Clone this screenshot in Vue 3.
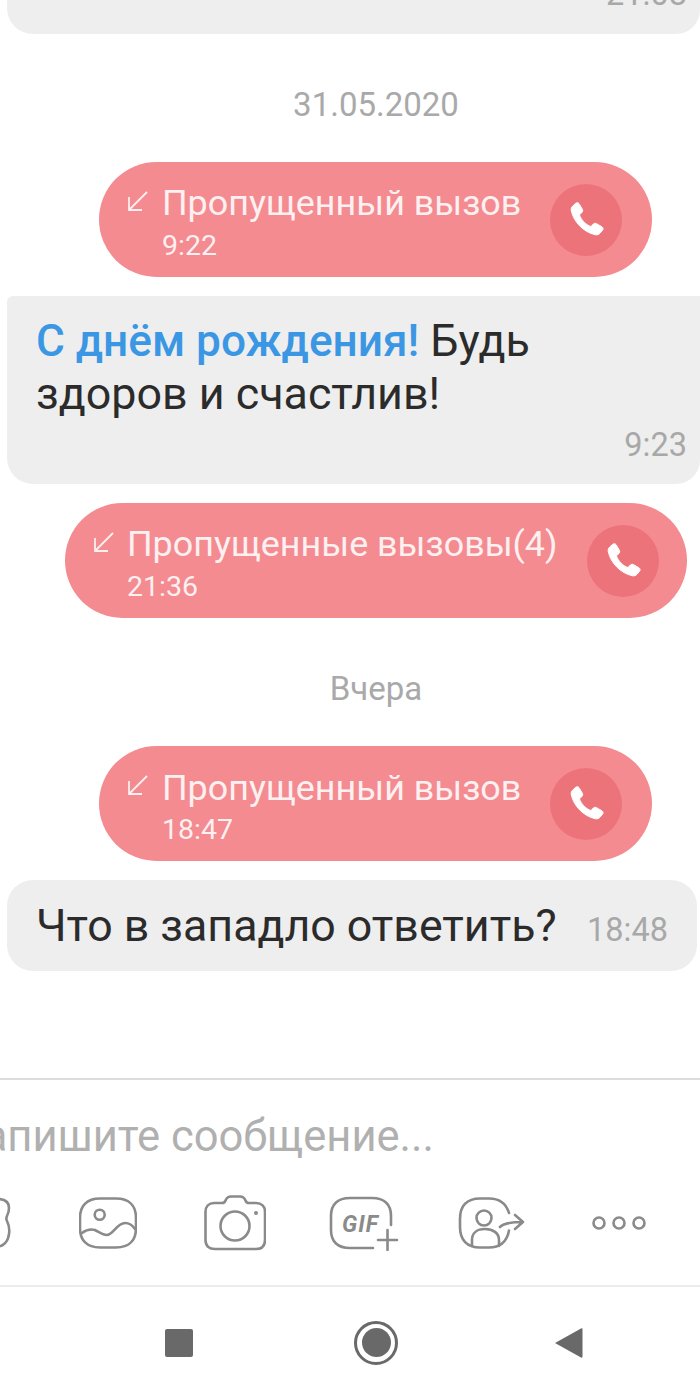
<script setup>
const calls = {
  first: { title: 'Пропущенный вызов', time: '9:22' },
  long: { title: 'Пропущенные вызовы(4)', time: '21:36' },
  third: { title: 'Пропущенный вызов', time: '18:47' }
}
const phonePath = 'M6.6 3.3c.6-.5 1.4-.4 1.8.2l1.7 2.9c.3.6.2 1.2-.2 1.7L8.6 9.2c.7 2.6 3.4 5.4 6 6.2l1.2-1.3c.5-.4 1.1-.5 1.7-.2l2.9 1.7c.6.4.7 1.2.2 1.8l-1.3 1.5c-.6.7-1.5 1-2.4.8C10.8 18.4 5.6 13.2 4.3 7.1c-.2-.9.1-1.8.8-2.4z'
</script>

<template>
  <div class="page">
    <div class="top-bubble"><span class="top-time">21:08</span></div>
    <div class="date first-date">31.05.2020</div>

    <div class="call call-short first-call">
      <svg class="arrow" viewBox="0 0 24 24" width="24" height="24"><path d="M21 3 3 21M3 8v13h13" /></svg>
      <div class="call-text">
        <div class="call-title">{{ calls.first.title }}</div>
        <div class="call-time">{{ calls.first.time }}</div>
      </div>
      <div class="phone"><svg viewBox="0 0 24 24" width="46" height="46"><path :d="phonePath" /></svg></div>
    </div>

    <div class="bubble wish">
      <div class="wish-text"><span class="blue">С днём рождения!</span> Будь<br />здоров и счастлив!</div>
      <div class="wish-time">9:23</div>
    </div>

    <div class="call call-long">
      <svg class="arrow" viewBox="0 0 24 24" width="24" height="24"><path d="M21 3 3 21M3 8v13h13" /></svg>
      <div class="call-text">
        <div class="call-title">{{ calls.long.title }}</div>
        <div class="call-time">{{ calls.long.time }}</div>
      </div>
      <div class="phone"><svg viewBox="0 0 24 24" width="46" height="46"><path :d="phonePath" /></svg></div>
    </div>

    <div class="date yesterday">Вчера</div>

    <div class="call call-short third-call">
      <svg class="arrow" viewBox="0 0 24 24" width="24" height="24"><path d="M21 3 3 21M3 8v13h13" /></svg>
      <div class="call-text">
        <div class="call-title">{{ calls.third.title }}</div>
        <div class="call-time">{{ calls.third.time }}</div>
      </div>
      <div class="phone"><svg viewBox="0 0 24 24" width="46" height="46"><path :d="phonePath" /></svg></div>
    </div>

    <div class="bubble reply">
      <span class="reply-text">Что в западло ответить?</span>
      <span class="reply-time">18:48</span>
    </div>

    <div class="composer">
      <div class="input-line"><span>Напишите сообщение...</span></div>
      <div class="tools">
        <svg class="t-smile" viewBox="0 0 40 54" width="40" height="54"><path d="M10 3h14c8 0 12 3 12 9 0 4-1 6-2 8-1 2-1 3 0 5 2 4 3 7 2 13-1 8-6 13-14 13H10" /></svg>
        <svg class="t-pic" viewBox="0 0 58 52" width="58" height="52"><path d="M21 1.5h16C50 1.5 57 8.5 57 21v10c0 12.5-7 19.5-20 19.5H21C8 50.5 1 43.5 1 31V21C1 8.5 8 1.5 21 1.5Z" /><circle cx="20.7" cy="17.7" r="5" /><path d="M3 36c4-3 9-4 13-3 4 2 8 5 12 5 6 0 10-12 18-12 4 0 8 3 10 6" /></svg>
        <svg class="t-cam" viewBox="0 0 62 56" width="62" height="56"><path d="M10 8h8c2 0 3-1 3.5-2.5C22.5 3 24 1.5 27 1.5h9c3 0 4.5 1.5 5.5 4C42 7 43 8 45 8h7c5.5 0 9 3.5 9 9v28c0 6-3.5 9-9 9H11c-6 0-9.5-3-9.5-9V17c0-5.5 3.5-9 8.5-9Z" /><circle cx="31" cy="31" r="14.5" /><circle class="fill" cx="52" cy="18" r="2" /></svg>
        <div class="t-gif">
          <svg viewBox="0 0 70 56" width="70" height="56"><path d="M62 30V21C62 9 55 3 43 3H21C9 3 2 9 2 21v14c0 12 7 18 19 18h23" /><path d="M49 45h19M58.5 35v20" /></svg>
          <span>GIF</span>
        </div>
        <svg class="t-share" viewBox="0 0 68 52" width="68" height="52"><path d="M51 16C48 6 41 1.5 31 1.5H22C9 1.5 2 8.5 2 22v8c0 13 7 20.5 20 20.5h9c11 0 18-6 20-17" /><circle cx="26" cy="21" r="7.5" /><path d="M14 49V43c0-7 5-11 13-11s14 4 14 11v6" /><path d="M42 30c3-3 8-5 23-5M57 18l8 7-8 7" /></svg>
        <svg class="t-dots" viewBox="0 0 54 14" width="54" height="14"><circle cx="7" cy="7" r="5.5" /><circle cx="27" cy="7" r="5.5" /><circle cx="47" cy="7" r="5.5" /></svg>
      </div>
    </div>

    <div class="nav">
      <div class="square"></div>
      <div class="ring"><div class="dot"></div></div>
      <svg viewBox="0 0 30 32" width="30" height="32"><path class="tri" d="M1 16 27 1.5c1-.5 1.5 0 1.5 1v27c0 1-.5 1.5-1.500 1Z" /></svg>
    </div>
  </div>
</template>

<style scoped>
.page {
  width: 700px;
  height: 1400px;
  overflow: hidden;
  background: #fff;
  display: flex;
  flex-direction: column;
  font-family: Roboto, "Noto Sans", sans-serif;
}
.top-bubble {
  height: 34px;
  margin-left: 7px;
  flex: none;
  background: #eeeeee;
  border-radius: 0 0 24px 26px;
  display: flex;
  justify-content: flex-end;
  align-items: flex-end;
  overflow: hidden;
}
.top-time {
  font-size: 32.5px;
  line-height: 36px;
  color: #a8a8a8;
  margin: 0 13px 22px 0;
}
.date {
  text-align: center;
  color: #a9a9a9;
  margin-left: 52px;
}
.first-date {
  font-size: 33px;
  line-height: 40px;
  margin-top: 51px;
}
.yesterday {
  font-size: 33px;
  line-height: 36px;
  margin-top: 53px;
}
.call {
  flex: none;
  height: 115px;
  box-sizing: border-box;
  background: #f48b90;
  border-radius: 58px;
  display: flex;
  color: #fff;
}
.call-short {
  width: 553px;
  margin-left: 99px;
}
.first-call {
  margin-top: 37px;
}
.third-call {
  margin-top: 39px;
}
.call-long {
  width: 622px;
  margin-left: 65px;
  margin-top: 19px;
}
.arrow {
  flex: none;
  margin: 27px 0 0 27px;
  fill: none;
  stroke: #fdeeef;
  stroke-width: 1.8;
}
.call-text {
  margin-left: 12px;
  padding-top: 20px;
  flex: 1;
  white-space: nowrap;
}
.call-long .call-text {
  margin-left: 11px;
}
.call-title {
  font-size: 35.9px;
  line-height: 42px;
  color: #fdf0f1;
}
.third-call .call-title {
  margin-top: 1px;
}
.call-time {
  font-size: 28.5px;
  line-height: 34px;
  margin-top: 5px;
  color: #fdf0f1;
}
.third-call .call-time {
  margin-top: 4px;
}
.phone {
  flex: none;
  width: 72px;
  height: 72px;
  margin: 22px 30px 0 0;
  border-radius: 50%;
  background: #ec7379;
  display: flex;
  align-items: center;
  justify-content: center;
}
.call-long .phone {
  margin-right: 28px;
}
.phone svg {
  fill: #fff;
  stroke: #fff;
  stroke-width: 0.5;
  stroke-linejoin: round;
}
.bubble {
  background: #eeeeee;
  margin-left: 7px;
  flex: none;
  box-sizing: border-box;
  color: #2b2b2b;
}
.wish {
  margin-top: 19px;
  height: 188px;
  border-radius: 6px 0 24px 26px;
  padding: 19px 13px 0 29px;
}
.wish-text {
  font-size: 44.8px;
  line-height: 52.5px;
}
.blue {
  color: #3b97e3;
  font-size: 44.2px;
  font-weight: 500;
}
.wish-time {
  font-size: 32.5px;
  line-height: 36px;
  color: #a8a8a8;
  text-align: right;
  margin-top: 7px;
}
.reply {
  margin-top: 19px;
  width: 690px;
  height: 91px;
  border-radius: 26px;
  padding: 0 29px 0 29px;
  display: flex;
  align-items: center;
  justify-content: space-between;
}
.reply-text {
  font-size: 44.7px;
}
.reply-time {
  font-size: 32.5px;
  color: #a8a8a8;
  margin-top: 8px;
}
.composer {
  margin-top: 107px;
  flex: none;
  height: 209px;
  box-sizing: border-box;
  border-top: 2px solid #dcdcdc;
  border-bottom: 2px solid #ececec;
}
.input-line {
  width: 434px;
  height: 113px;
  overflow: hidden;
  display: flex;
  justify-content: flex-end;
  align-items: center;
  box-sizing: border-box;
  white-space: nowrap;
  font-size: 43.5px;
  color: #b0b0b0;
}
.input-line span {
  flex: none;
}
.tools {
  display: flex;
  align-items: center;
  height: 60px;
}
.tools svg {
  flex: none;
  fill: none;
  stroke: #8a8a8a;
  stroke-width: 2.6;
  stroke-linecap: round;
  stroke-linejoin: round;
}
.tools svg .fill {
  fill: #8a8a8a;
  stroke: none;
}
.t-smile {
  margin-left: -27px;
}
.t-pic {
  margin-left: 66px;
}
.t-cam {
  margin-left: 67px;
}
.t-gif {
  margin-left: 63px;
  width: 70px;
  height: 56px;
  flex: none;
  position: relative;
}
.t-gif span {
  position: absolute;
  left: 13px;
  top: 18px;
  font-size: 23px;
  line-height: 24px;
  letter-spacing: 1px;
  font-weight: 700;
  font-style: italic;
  color: #8a8a8a;
}
.t-share {
  margin-left: 59px;
}
.t-dots {
  margin-left: 66px;
}
.nav {
  flex: 1;
  display: flex;
  align-items: center;
  padding-left: 165px;
  padding-bottom: 2px;
}
.square {
  width: 28px;
  height: 28px;
  border-radius: 2px;
  background: #696969;
}
.ring {
  width: 44px;
  height: 44px;
  box-sizing: border-box;
  margin-left: 161px;
  border: 3px solid #696969;
  border-radius: 50%;
  display: flex;
  align-items: center;
  justify-content: center;
}
.dot {
  width: 29px;
  height: 29px;
  border-radius: 50%;
  background: #696969;
}
.nav svg {
  margin-left: 156px;
}
.tri {
  fill: #696969;
}
</style>
